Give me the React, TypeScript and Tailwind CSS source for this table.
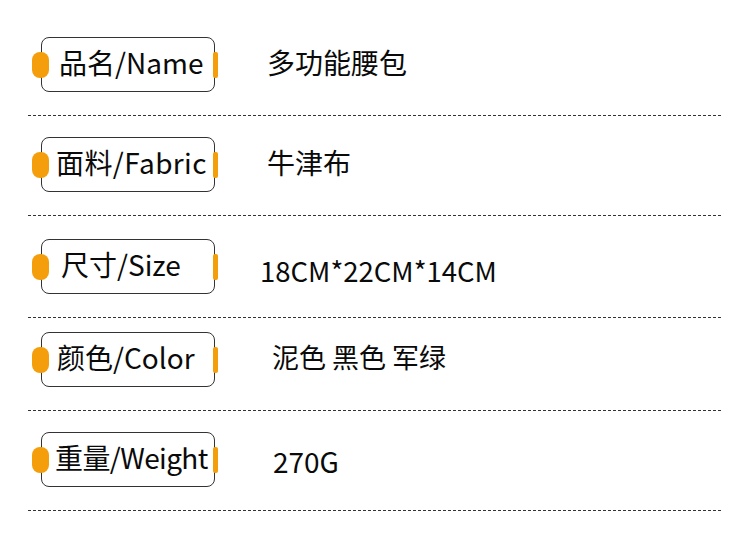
const rows = [
  {
    label: "品名/Name",
    value: "多功能腰包",
    rowPad: "pt-[37px]",
    labelPad: "pl-[17px]",
    valueClass: "ml-[52px] text-[28px]",
  },
  {
    label: "面料/Fabric",
    value: "牛津布",
    rowPad: "pt-[21px]",
    labelPad: "pl-[14px] tracking-[0.4px]",
    valueClass: "ml-[52px] text-[28px]",
  },
  {
    label: "尺寸/Size",
    value: "18CM*22CM*14CM",
    rowPad: "pt-[23px]",
    labelPad: "pl-[19px]",
    valueClass: "ml-[45px] pt-[14px] text-[27.5px]",
  },
  {
    label: "颜色/Color",
    value: "泥色 黑色 军绿",
    rowPad: "pt-[14px]",
    labelPad: "pl-[15px]",
    valueClass: "ml-[57px] text-[27px]",
  },
  {
    label: "重量/Weight",
    value: "270G",
    rowPad: "pt-[21px]",
    labelPad: "pl-[13px] tracking-[-0.6px]",
    valueClass: "ml-[58px] pt-[9px] text-[28px]",
  },
];

function LabelBox({ text, pad }: { text: string; pad: string }) {
  return (
    <div
      className={`relative flex h-[55px] w-[174px] shrink-0 items-center rounded-[8px] border-[1.5px] border-[#333] ${pad}`}
    >
      <span className="absolute -left-[10px] top-1/2 h-[26px] w-[17px] -translate-y-1/2 rounded-[8px] bg-[#f59e0b]" />
      <span className="absolute -right-[4px] top-1/2 h-[26px] w-[5px] -translate-y-1/2 rounded-[2px] bg-[#f59e0b]" />
      <span className="whitespace-nowrap pb-[6px] text-[28px] leading-none text-[#0a0a0a]">{text}</span>
    </div>
  );
}

export default function App() {
  return (
    <div className="h-[535px] w-[750px] bg-white font-['Noto_Sans_CJK_SC','Noto_Sans',sans-serif]">
      <div className="ml-[28px] w-[695px]">
        {rows.map((row) => (
          <div key={row.label} className={row.rowPad}>
            <div className="flex items-center pl-[13px]">
              <LabelBox text={row.label} pad={row.labelPad} />
              <span
                className={`whitespace-nowrap pb-[6px] leading-none text-[#0a0a0a] ${row.valueClass}`}
              >
                {row.value}
              </span>
            </div>
            <div className="mt-[23px] h-px bg-[repeating-linear-gradient(to_right,#333_0_3px,transparent_3px_5px)]" />
          </div>
        ))}
      </div>
    </div>
  );
}
